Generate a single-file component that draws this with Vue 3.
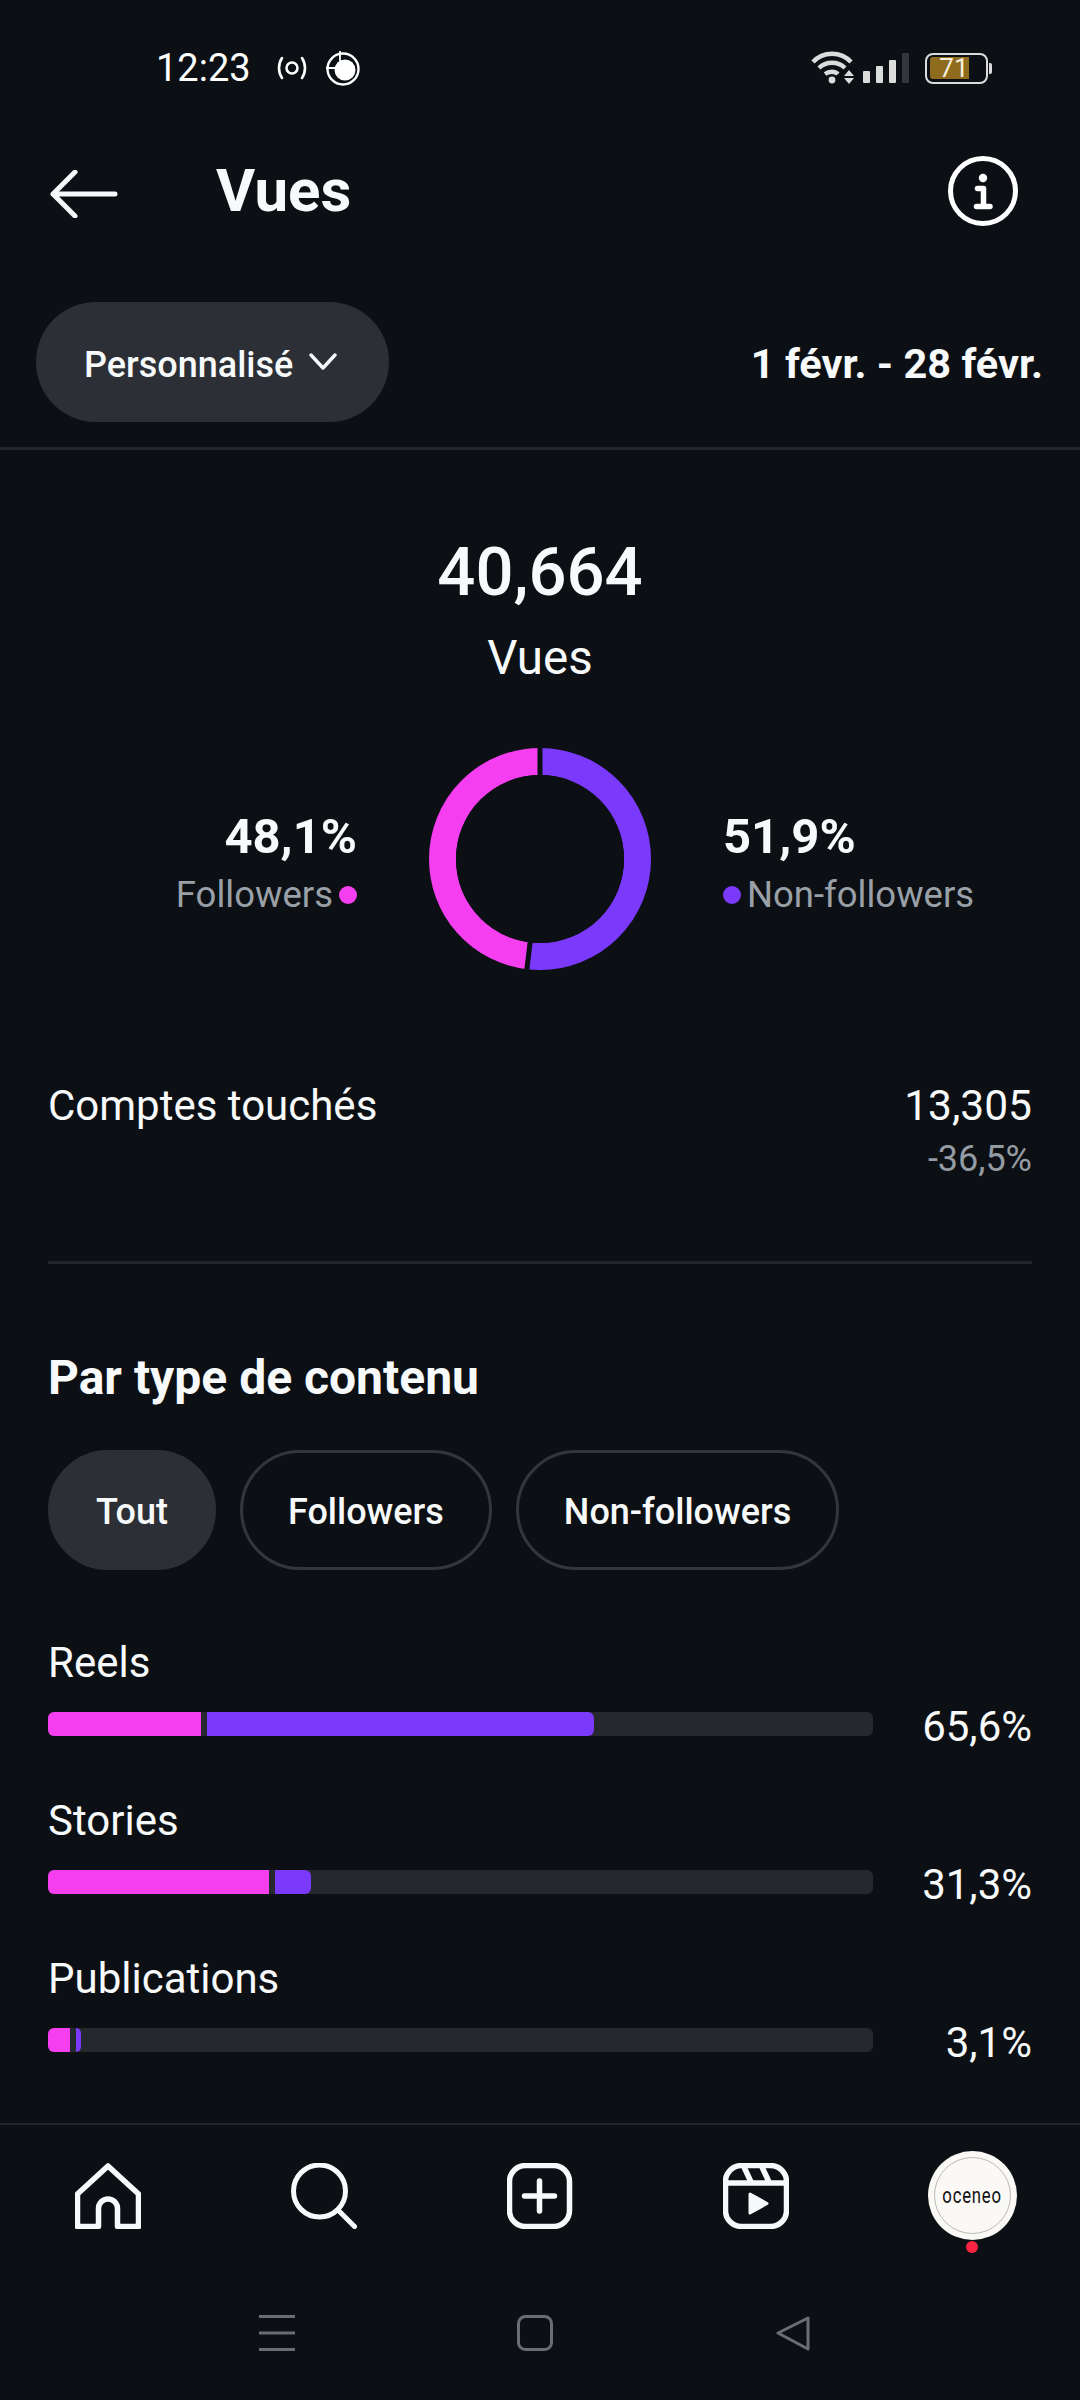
<template>
  <div class="screen">
    <div class="status-bar">
      <span class="clock">12:23</span>
      <svg class="ic-hotspot" width="30" height="24" viewBox="0 0 30 24" fill="none" stroke="#fff" stroke-width="2.6">
        <circle cx="15" cy="12" r="5.5" />
        <path d="M5 2c-4 6-4 14 0 20M25 2c4 6 4 14 0 20" stroke-linecap="round" />
      </svg>
      <svg class="ic-record" width="36" height="36" viewBox="0 0 36 36" fill="none" stroke="#fff" stroke-width="2.4">
        <circle cx="18" cy="19" r="15.5" />
        <circle cx="20" cy="20" r="10.5" fill="#fff" stroke="none" />
        <path d="M15 1v12M1 18h11" stroke-width="1.8" />
      </svg>
      <div class="status-right">
        <svg width="44" height="34" viewBox="0 0 44 34" fill="none" stroke="#dcdcdc" stroke-width="4.4">
          <path d="M2 11C12 0 30 0 40 11M8 17c7-7 19-7 26 0M14 23c4-3 10-3 13 0" />
          <circle cx="21" cy="29" r="3.4" fill="#dcdcdc" stroke="none" />
          <path d="M38 20l5 6H33zM38 34l5-6H33z" fill="#dcdcdc" stroke="none" transform="translate(0 -1)" />
        </svg>
        <div class="signal">
          <i v-for="(bar, i) in signalBars" :key="i" :class="{ off: bar.off }" :style="{ height: bar.h + 'px' }"></i>
        </div>
        <div class="battery">
          <div class="battery-fill"><span>71</span></div>
        </div>
        <div class="battery-tip"></div>
      </div>
    </div>

    <header class="top-bar">
      <svg class="back" width="68" height="48" viewBox="0 0 68 48" fill="none" stroke="#f7f9fa" stroke-width="5" stroke-linecap="round" stroke-linejoin="round">
        <path d="M65 24H3M25 2L3 24l22 22" />
      </svg>
      <h1 class="title">Vues</h1>
      <svg class="info" width="70" height="70" viewBox="0 0 70 70" fill="none">
        <circle cx="35" cy="35" r="32.5" stroke="#fff" stroke-width="5" />
        <circle cx="35" cy="22" r="4.2" fill="#fff" />
        <path d="M29.500 32.500h6V50M28.500 50.500h13.500" stroke="#fff" stroke-width="5.500" stroke-linejoin="round" stroke-linecap="round" />
      </svg>
    </header>

    <div class="range-row">
      <div class="range-pill">
        <span>Personnalisé</span>
        <svg width="30" height="18" viewBox="0 0 30 18" fill="none" stroke="#f7f9fa" stroke-width="3.4" stroke-linecap="round" stroke-linejoin="round">
          <path d="M3 2l12 13L27 2" />
        </svg>
      </div>
      <span class="range-dates">1 févr. - 28 févr.</span>
    </div>

    <main class="content">
      <section class="summary">
        <div class="total">40,664</div>
        <div class="total-label">Vues</div>
        <div class="split">
          <div class="split-side left">
            <div class="split-value">48,1%</div>
            <div class="split-label">Followers<i class="dot pink"></i></div>
          </div>
          <svg class="donut" width="222" height="222" viewBox="0 0 222 222" fill="none">
            <g stroke-width="27" transform="rotate(-90 111 111)">
              <circle v-for="seg in donut" :key="seg.color" cx="111" cy="111" r="97.5" pathLength="100" :stroke="seg.color" :stroke-dasharray="seg.dash" :stroke-dashoffset="seg.offset" />
            </g>
            <path d="M111 111V0M111 111L97.8 222" stroke="#0c1014" stroke-width="5" />
            <circle cx="111" cy="111" r="84" fill="#0c1014" />
          </svg>
          <div class="split-side right">
            <div class="split-value">51,9%</div>
            <div class="split-label"><i class="dot violet"></i>Non-followers</div>
          </div>
        </div>
      </section>

      <section class="reach">
        <span>Comptes touchés</span>
        <div class="reach-nums">
          <div>13,305</div>
          <div class="reach-delta">-36,5%</div>
        </div>
      </section>

      <section class="by-type">
        <h2>Par type de contenu</h2>
        <div class="chips">
          <div v-for="chip in chips" :key="chip" class="chip" :class="{ active: chip === 'Tout' }">{{ chip }}</div>
        </div>
        <div class="rows">
          <div v-for="row in rows" :key="row.label" class="row">
            <div class="row-label">{{ row.label }}</div>
            <div class="row-line">
              <div class="track">
                <div class="seg pink" :style="{ width: row.pink + 'px' }"></div>
                <div class="seg violet" :style="{ width: row.violet + 'px' }"></div>
              </div>
              <span class="row-pct">{{ row.pct }}</span>
            </div>
          </div>
        </div>
      </section>
    </main>

    <nav class="tab-bar">
      <svg width="66" height="66" viewBox="0 0 66 66" fill="none" stroke="#f7f9fa" stroke-width="5.500" stroke-linejoin="round" stroke-linecap="round">
        <path d="M2.500 63.500V31L33 3l30.500 28v32.500H42.500V45.500a9.500 9.500 0 0 0-19 0v18z" />
      </svg>
      <svg width="66" height="66" viewBox="0 0 66 66" fill="none" stroke="#f7f9fa" stroke-width="5" stroke-linecap="round">
        <circle cx="28.500" cy="28" r="26" />
        <path d="M47 47l16.500 16.500" />
      </svg>
      <svg width="66" height="66" viewBox="0 0 66 66" fill="none" stroke="#f7f9fa" stroke-width="5.500" stroke-linecap="round">
        <rect x="2.500" y="2.500" width="60" height="61" rx="16" />
        <path d="M32.500 18v30M17.500 33h30" />
      </svg>
      <svg width="66" height="66" viewBox="0 0 66 66" fill="none" stroke="#f7f9fa" stroke-width="5.500">
        <rect x="2.500" y="2.500" width="61" height="61" rx="16" />
        <path d="M3 20h60M21 4l7 15M39 4l7 15" />
        <path d="M27 31l17 9.500-17 9.500z" fill="#f7f9fa" stroke="#f7f9fa" stroke-width="3" stroke-linejoin="round" />
      </svg>
      <div class="avatar">
        <div class="avatar-ring"><span>oceneo</span></div>
        <i class="avatar-dot"></i>
      </div>
    </nav>

    <div class="system-nav">
      <svg width="36" height="36" viewBox="0 0 36 36" fill="#6a6d71">
        <rect y="0" width="36" height="3" />
        <rect y="16.500" width="36" height="3" />
        <rect y="33" width="36" height="3" />
      </svg>
      <svg width="36" height="36" viewBox="0 0 36 36" fill="none" stroke="#6a6d71" stroke-width="3">
        <rect x="1.500" y="1.500" width="33" height="33" rx="7" />
      </svg>
      <svg width="36" height="36" viewBox="0 0 36 36" fill="none" stroke="#6a6d71" stroke-width="3" stroke-linejoin="round">
        <path d="M33 3L3 18l30 16z" />
      </svg>
    </div>
  </div>
</template>

<script setup>
const signalBars = [
  { h: 12 },
  { h: 17 },
  { h: 23 },
  { h: 30, off: true }
]

const chips = ['Tout', 'Followers', 'Non-followers']

const donut = [
  { color: '#7b39fb', dash: '51.9 48.1', offset: 0 },
  { color: '#f43ef0', dash: '48.1 51.9', offset: -51.9 }
]

const rows = [
  { label: 'Reels', pct: '65,6%', pink: 153, violet: 387 },
  { label: 'Stories', pct: '31,3%', pink: 221, violet: 36 },
  { label: 'Publications', pct: '3,1%', pink: 22, violet: 5 }
]
</script>

<style>
html,
body {
  margin: 0;
  background: #0c1014;
}
</style>

<style scoped>
.screen {
  width: 1080px;
  height: 2400px;
  display: flex;
  flex-direction: column;
  background: #0c1014;
  color: #f7f9fa;
  font-family: Roboto, "Liberation Sans", sans-serif;
  overflow: hidden;
}

.status-bar {
  height: 136px;
  padding: 0 88px 0 156px;
  display: flex;
  align-items: center;
  box-sizing: border-box;
}

.clock {
  font-size: 38px;
  color: #fff;
}

.ic-hotspot {
  margin-left: 26px;
}

.ic-record {
  margin-left: 18px;
}

.status-right {
  margin-left: auto;
  display: flex;
  align-items: center;
}

.signal {
  display: flex;
  align-items: flex-end;
  gap: 6px;
  margin-left: 8px;
  height: 30px;
}

.signal i {
  width: 7px;
  background: #dcdcdc;
  border-radius: 1px;
}

.signal i.off {
  background: #33373c;
}

.battery {
  margin-left: 16px;
  width: 63px;
  height: 31px;
  box-sizing: border-box;
  border: 2.5px solid #dcdcdc;
  border-radius: 8px;
  padding: 2.5px;
}

.battery-fill {
  width: 39px;
  height: 100%;
  background: #8f6c1d;
  border-radius: 3px 0 0 3px;
  display: flex;
  justify-content: flex-end;
  align-items: center;
}

.battery-fill span {
  font-size: 26px;
  line-height: 1;
  color: #f5eedc;
}

.battery-tip {
  width: 3px;
  height: 11px;
  margin-left: 1px;
  background: #dcdcdc;
  border-radius: 0 2px 2px 0;
}

.top-bar {
  height: 108px;
  padding: 0 62px 0 50px;
  display: flex;
  align-items: center;
}

.back {
  margin-top: 7px;
}

.title {
  margin: 2px 0 0 98px;
  font-size: 60px;
  font-weight: 700;
  line-height: 1;
}

.info {
  margin-left: auto;
  margin-top: 2px;
}

.range-row {
  margin-top: 58px;
  padding: 0 37px 25px 36px;
  display: flex;
  align-items: center;
  justify-content: space-between;
  border-bottom: 3px solid #22262b;
}

.range-pill {
  width: 353px;
  height: 120px;
  box-sizing: border-box;
  padding-left: 48px;
  border-radius: 60px;
  background: #2c3036;
  display: flex;
  align-items: center;
  gap: 15px;
  font-size: 36px;
  font-weight: 500;
}

.range-pill span {
  padding-top: 6px;
}

.range-dates {
  padding-top: 3px;
  font-size: 41.5px;
  font-weight: 700;
}

.content {
  padding: 0 48px;
}

.summary {
  display: flex;
  flex-direction: column;
  align-items: center;
}

.total {
  margin-top: 84px;
  font-size: 67px;
  line-height: 76px;
  font-weight: 500;
}

.total-label {
  margin-top: 21px;
  font-size: 47.5px;
  line-height: 54px;
}

.split {
  margin-top: 63px;
  display: grid;
  grid-template-columns: 1fr 222px 1fr;
  align-items: center;
  width: 100%;
}

.split-side {
  display: flex;
  flex-direction: column;
  gap: 8px;
  padding-top: 7px;
}

.split-side.left {
  align-items: flex-end;
  padding-right: 72px;
}

.split-side.right {
  align-items: flex-start;
  padding-left: 72px;
}

.split-value {
  font-size: 49px;
  font-weight: 700;
  line-height: 56px;
}

.split-label {
  display: flex;
  align-items: center;
  gap: 6px;
  font-size: 36.5px;
  line-height: 44px;
  color: #9aa0a8;
}

.dot {
  width: 18px;
  height: 18px;
  border-radius: 50%;
}

.pink {
  background: #f43ef0;
}

.violet {
  background: #7b39fb;
}

.reach {
  margin-top: 111px;
  height: 180px;
  display: flex;
  justify-content: space-between;
  font-size: 42px;
  line-height: 50px;
  border-bottom: 3px solid #22262b;
}

.reach-nums {
  text-align: right;
  font-size: 42.5px;
}

.reach-delta {
  margin-top: 6px;
  font-size: 36px;
  line-height: 44px;
  color: #959ba3;
}

.by-type h2 {
  margin: 86px 0 0;
  font-size: 48px;
  line-height: 56px;
  font-weight: 700;
}

.chips {
  margin-top: 44px;
  display: flex;
  gap: 24px;
}

.chip {
  height: 120px;
  box-sizing: border-box;
  padding: 4px 45px 0;
  display: flex;
  align-items: center;
  border-radius: 60px;
  border: 3px solid #33373c;
  font-size: 36px;
  font-weight: 500;
}

.chip.active {
  background: #2c3036;
  border-color: #2c3036;
}

.rows {
  margin-top: 68px;
  display: flex;
  flex-direction: column;
  gap: 48px;
}

.row-label {
  font-size: 42px;
  line-height: 50px;
}

.row-line {
  margin-top: 12px;
  height: 48px;
  display: flex;
  align-items: center;
  justify-content: space-between;
}

.track {
  width: 825px;
  height: 24px;
  border-radius: 6px;
  background: #25282d;
  overflow: hidden;
  display: flex;
  gap: 6px;
}

.seg {
  height: 100%;
}

.seg.violet {
  border-radius: 0 6px 6px 0;
}

.row-pct {
  font-size: 42px;
  line-height: 48px;
  margin-top: 6px;
}

.tab-bar {
  margin-top: auto;
  height: 150px;
  box-sizing: border-box;
  border-top: 2px solid #22262b;
  padding-top: 38px;
  display: grid;
  grid-template-columns: repeat(5, 216px);
  justify-items: center;
  align-items: start;
}

.avatar {
  position: relative;
  width: 89px;
  height: 89px;
  margin-top: -12px;
  border-radius: 50%;
  background: #fbf9f6;
  display: flex;
  align-items: center;
  justify-content: center;
}

.avatar-ring {
  width: 77px;
  height: 77px;
  box-sizing: border-box;
  border: 1px solid #b9b9b6;
  border-radius: 50%;
  display: flex;
  align-items: center;
  justify-content: center;
  font-size: 22px;
  letter-spacing: 1px;
  color: #111;
}

.avatar-ring span {
  transform: scaleX(0.76);
}

.avatar-dot {
  position: absolute;
  left: 38px;
  top: 90px;
  width: 12px;
  height: 12px;
  border-radius: 50%;
  background: #ff2442;
}

.system-nav {
  height: 127px;
  padding: 42px 269px 0 259px;
  box-sizing: border-box;
  display: flex;
  justify-content: space-between;
  align-items: flex-start;
}
</style>
